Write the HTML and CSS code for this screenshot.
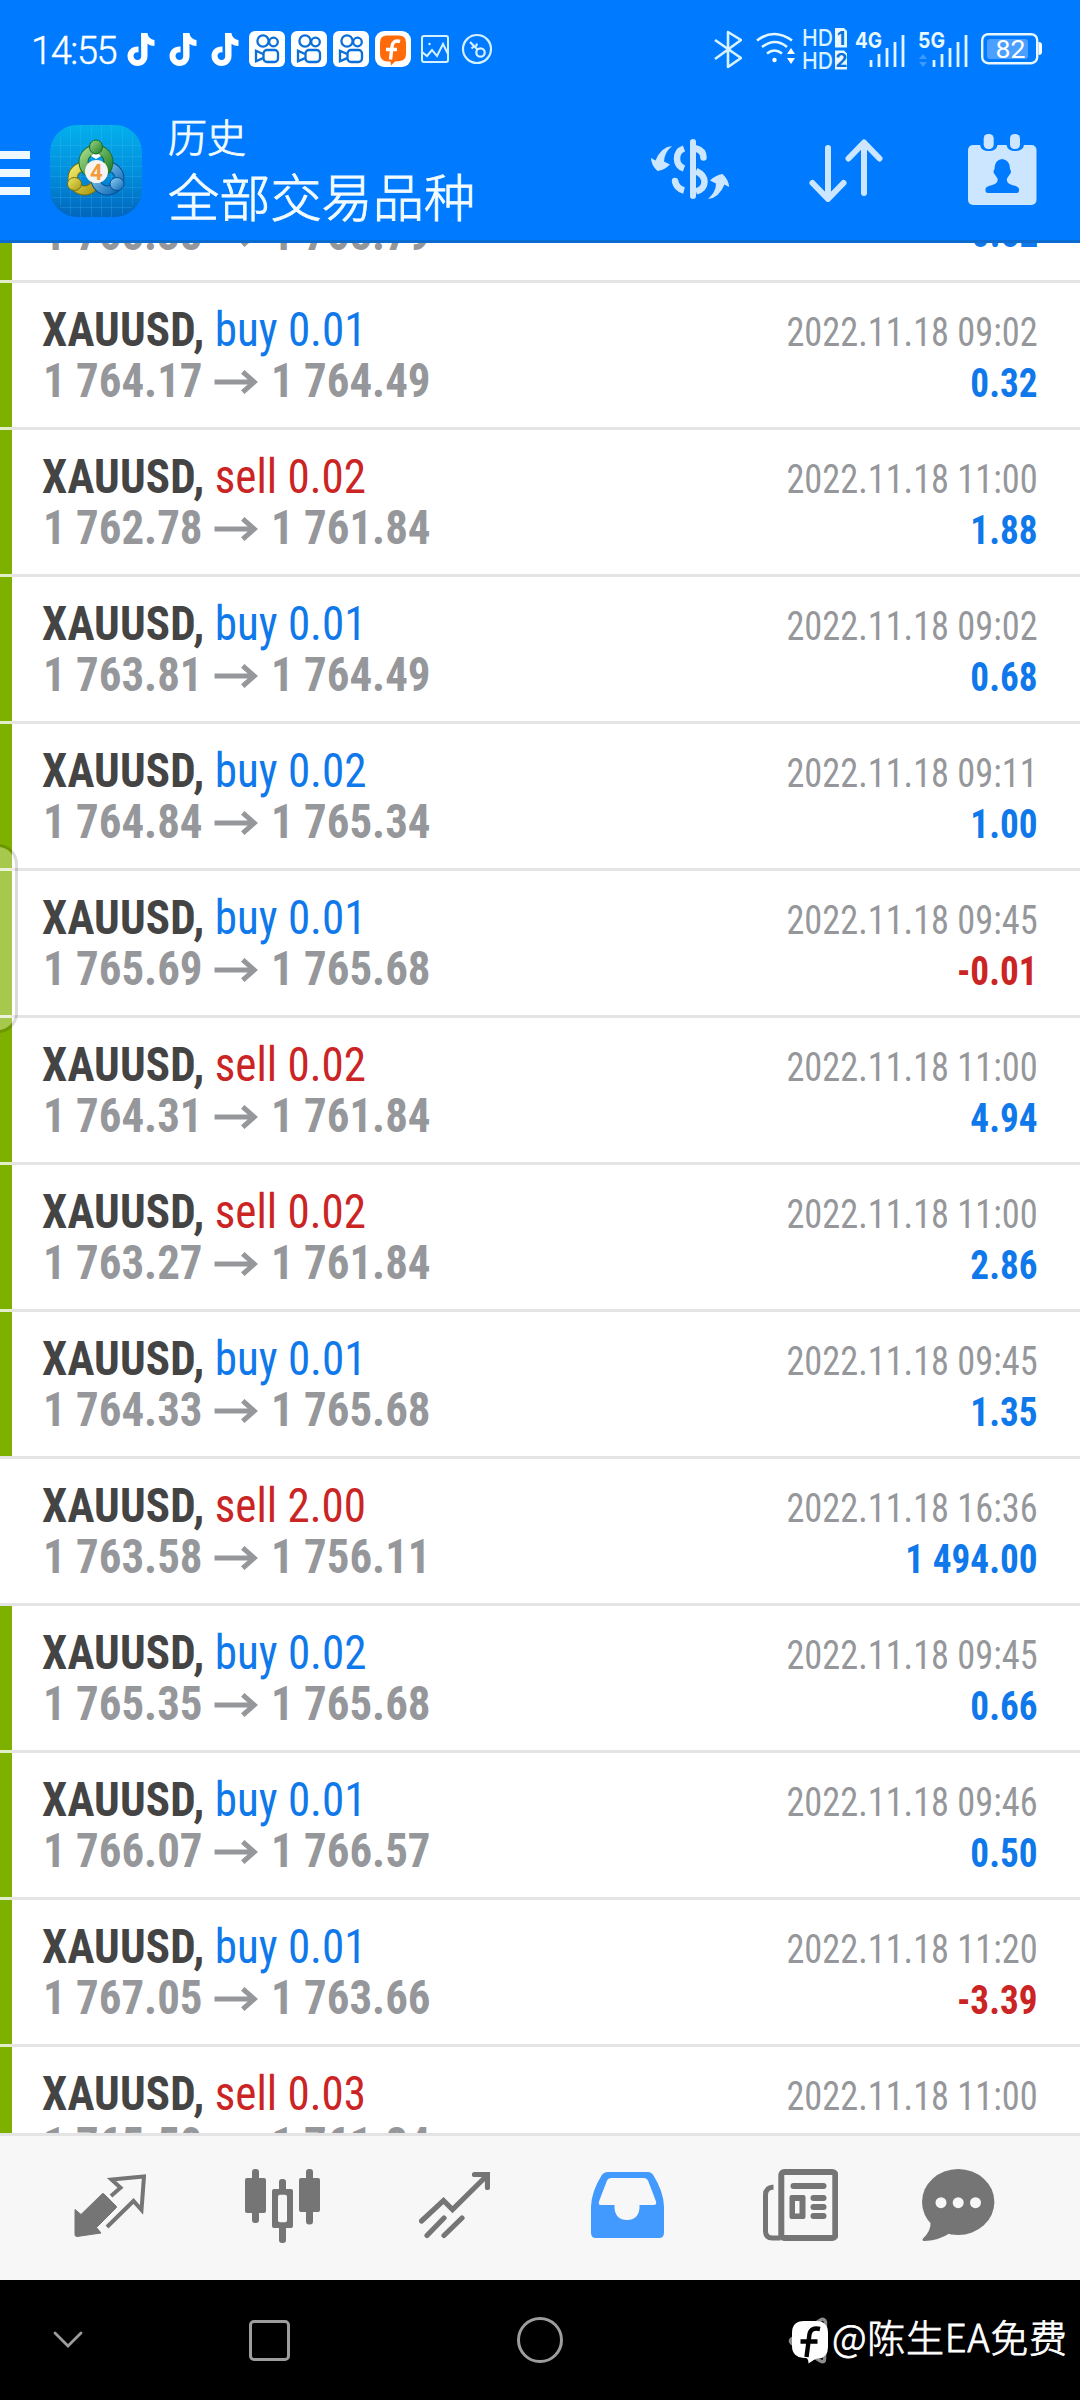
FILE: index.html
```html
<!DOCTYPE html>
<html lang="zh-CN">
<head>
<meta charset="utf-8">
<title>历史</title>
<link rel="stylesheet" href="styles.css">
</head>
<body>
<svg class="defs" width="0" height="0">
  <defs>
    <symbol id="note" viewBox="0 0 36 36"><path d="M18 2h6.500c.5 4 3 6.500 7 7v6c-2.500 0-5-.8-7-2.200V25c0 6-4.500 10-10 10S4.500 30.500 4.500 25c0-6 5-10 11-9.500v6c-2.700-.6-5 1-5 3.600 0 2.400 1.800 3.900 4 3.900 2.300 0 3.700-1.600 3.700-4z" fill="#fff"/></symbol>
    <symbol id="cam" viewBox="0 0 36 36"><rect width="36" height="36" rx="6" fill="#fff"/><g fill="none" stroke="#0a6fd8" stroke-width="2.300"><circle cx="14" cy="10" r="5.600"/><circle cx="24.500" cy="11" r="4.300"/><rect x="14.500" y="19" width="14.500" height="12" rx="3.500"/><path d="M14 23l-7-3.200v10.500l7-3.200"/></g></symbol>
    <symbol id="arrow" viewBox="0 0 44 24" preserveAspectRatio="none"><path d="M0 12h39M28.500 1.800l11.500 10.200L28.500 22.200" fill="none" stroke="#95979b" stroke-width="5"/></symbol>
  </defs>
</svg>

<header class="top">
  <div class="status">
    <span class="clock">14:55</span>
    <div class="notifs">
      <svg><use href="#note"/></svg><svg><use href="#note"/></svg><svg><use href="#note"/></svg>
      <svg><use href="#cam"/></svg><svg><use href="#cam"/></svg><svg><use href="#cam"/></svg>
      <svg viewBox="0 0 36 36"><rect width="36" height="36" rx="9" fill="#fff"/><path d="M12 4.500h12q7 0 7 7v11q0 7-6 7.500l-5 .5-4 4-.5-4H12q-7-1-7-8v-11q0-7 7-7z" fill="#ff6a0a"/><path d="M25 10.500c-5-1.500-7.500 1-8 5l-1.500 13M11 18.500h11" fill="none" stroke="#fff" stroke-width="3.400"/></svg>
      <svg viewBox="0 0 36 36" fill="none" stroke="#d5f0ff" stroke-width="2"><rect x="5" y="5" width="26" height="26" rx="2"/><path d="M5 21l5 4 5-6 5 6 6-12 5 10"/><circle cx="12.500" cy="13" r="1.200" fill="#d5f0ff" stroke="none"/></svg>
      <svg viewBox="0 0 36 36" fill="none" stroke="#d5f0ff" stroke-width="2.200"><circle cx="18" cy="18" r="14"/><circle cx="21.500" cy="21.500" r="4.200"/><path d="M18.500 18.500l-7.500-7.500M15.500 15l-3 2.500M18 12.500l-1 3"/></svg>
    </div>
    <div class="system">
      <svg class="bt" viewBox="0 0 28 38"><path d="M1 10l26 18-13 9V2l13 8L1 29" fill="none" stroke="#d8f2ff" stroke-width="2.600" stroke-linejoin="round"/></svg>
      <svg class="wifi" viewBox="0 0 40 34"><g fill="none" stroke="#e4f7ff" stroke-width="2.600"><path d="M1 8.500q17-13 35 0M6 15q13-10 25 0M11 21.500q7.500-6 15 0"/></g><circle cx="18.500" cy="28" r="2.200" fill="#fff"/><path d="M31 22l4-6 4 6zM31 26h8l-4 6z" fill="#fff"/></svg>
      <svg class="hd" viewBox="0 0 44 42"><path d="M32 0h9l3 3v16.500H32zM32 22.500h9l3 3v16H32z" fill="#e8f8ff"/><g font-family="Inter" font-size="22.500" font-weight="500" fill="#d8f2ff"><text x="-1" y="18" textLength="31" lengthAdjust="spacingAndGlyphs">HD</text><text x="-1" y="40.500" textLength="31" lengthAdjust="spacingAndGlyphs">HD</text></g><g font-family="Inter" font-size="19" font-weight="700" fill="#0a6fd8"><text x="34" y="17">1</text><text x="32.500" y="39">2</text></g></svg>
      <svg class="sig" viewBox="0 0 50 36"><text x="0" y="17" font-family="Inter" font-size="21.500" font-weight="700" fill="#e8f8ff" textLength="27" lengthAdjust="spacingAndGlyphs">4G</text><path d="M16 29v7M24 23v13M32 17v19M40 11v25M48 4v32" stroke="#e0f5ff" stroke-width="2.800"/></svg>
      <svg class="sig" viewBox="0 0 50 36"><text x="0" y="17" font-family="Inter" font-size="21.500" font-weight="700" fill="#e8f8ff" textLength="27" lengthAdjust="spacingAndGlyphs">5G</text><path d="M16 29v7M24 23v13M32 17v19M40 11v25M48 4v32" stroke="#e0f5ff" stroke-width="2.800"/><path d="M1 28l4-5 4 5zM1 31h8l-4 5z" fill="#3f9aff"/></svg>
      <svg class="batt" viewBox="0 0 61 32"><rect x="1.200" y="1.200" width="55" height="29" rx="6" fill="none" stroke="#e8f8ff" stroke-width="2.400"/><rect x="6" y="6" width="41" height="20" rx="3" fill="#4b9fff"/><path d="M57.500 9q3.500 0 3.500 3v7q0 3-3.500 3z" fill="#fff"/><text x="14.500" y="25.300" font-family="Roboto" font-size="26.500" textLength="30" lengthAdjust="spacingAndGlyphs" fill="#fff">82</text></svg>
    </div>
  </div>

  <div class="appbar">
    <div class="burger"><i></i><i></i><i></i></div>
    <svg class="logo" viewBox="0 0 92 92">
      <defs>
        <linearGradient id="bg" x1="0" y1="0" x2="0" y2="1"><stop offset="0" stop-color="#03b0ec"/><stop offset=".5" stop-color="#0290dd"/><stop offset="1" stop-color="#0166bd"/></linearGradient>
        <linearGradient id="gr" x1="0" y1="0" x2="1" y2="1"><stop offset="0" stop-color="#9fd883"/><stop offset="1" stop-color="#1f7d2d"/></linearGradient>
        <linearGradient id="ye" x1="0" y1="0" x2="1" y2="1"><stop offset="0" stop-color="#f1e868"/><stop offset="1" stop-color="#a99a12"/></linearGradient>
        <linearGradient id="bl" x1="0" y1="0" x2="1" y2="1"><stop offset="0" stop-color="#8fd3f5"/><stop offset="1" stop-color="#0d66b4"/></linearGradient>
      </defs>
      <rect width="92" height="92" rx="27" fill="url(#bg)"/>
      <path d="M10.500 12v68M20.500 2v88M30.500 0v92M41.500 0v92M51.500 0v92M61.500 0v92M72.500 3v86M82.500 12v68M2 20.500h88M0 31.500h92M0 41.500h92M0 51.500h92M0 62.500h92M2 72.500h88M10 82.500h72" stroke="#5cc4ff" stroke-opacity=".2"/>
      <g fill="none" stroke-width="8">
        <circle cx="34.500" cy="53.500" r="12" stroke="#74700f" stroke-width="10"/><circle cx="34.500" cy="53.500" r="12" stroke="url(#ye)"/>
        <circle cx="57.500" cy="53.500" r="12" stroke="#0a4e93" stroke-width="10"/><circle cx="57.500" cy="53.500" r="12" stroke="url(#bl)"/>
        <circle cx="46" cy="37" r="12.500" stroke="#176a25" stroke-width="10"/><circle cx="46" cy="37" r="12.500" stroke="url(#gr)"/>
      </g>
      <path d="M41 31l5 3 5-3-2-2h-6z" fill="#fff"/>
      <ellipse cx="46" cy="22" rx="6.500" ry="7" fill="url(#gr)" stroke="#176a25"/>
      <ellipse cx="24.500" cy="59" rx="7" ry="6.500" fill="url(#ye)" stroke="#74700f"/>
      <ellipse cx="67" cy="59" rx="7" ry="6.500" fill="url(#bl)" stroke="#0a4e93"/>
      <circle cx="46.500" cy="46.500" r="11.500" fill="#f6f4f2"/>
      <text x="40" y="54.500" font-family="Roboto" font-size="22" font-weight="700" fill="#f29a3c">4</text>
    </svg>
    <div class="titles"><div class="sub">历史</div><div class="main">全部交易品种</div></div>
    <svg class="act dollar" viewBox="651 139 78 60"><g fill="none" stroke="#cce6ff" stroke-width="6.500"><path d="M693 142v54" stroke-width="6" stroke-linecap="round"/><path d="M684 148.500q-7 2.500-7 10t7 10M696 171q8.500 4 8.500 11t-8.500 9.500"/><path d="M696 148.500q7.500 2 7.500 9" stroke-linecap="round"/><path d="M675 181q1.500 7.500 9 9.500"/><circle cx="675" cy="181" r="3.200" fill="#cce6ff" stroke="none"/></g><g fill="#cce6ff"><path id="swirl" d="M672 146q-11 1-16.500 14.500L651 158q0 7 6.500 13 7-1 12.500-6.500l-6-3q0-8.500 8-15.500z"/><use href="#swirl" transform="rotate(180 690 172.500)"/></g></svg>
    <svg class="act sort" viewBox="809 139 74 63" fill="none" stroke="#cce6ff" stroke-width="6" stroke-linecap="round" stroke-linejoin="round"><path d="M828 148v50M812.500 183l15.500 16 15.500-16M864 193v-50M848.500 158.500l15.500-16 15.500 16"/></svg>
    <svg class="act cal" viewBox="967 134 70 72"><rect x="968" y="145" width="68.500" height="60" rx="5" fill="#cce6ff"/><path d="M980 144h17.500v1q-1 6-8.700 6t-8.800-6zM1006.500 144h17.500v1q-1 6-8.700 6t-8.800-6z" fill="#007bff"/><rect x="983.700" y="134" width="10" height="15" rx="4.500" fill="#cce6ff"/><rect x="1010" y="134" width="10" height="15" rx="4.500" fill="#cce6ff"/><path d="M1002 159q8 1 8 10 2 3 0 5l-3 4.500q-1 5 5 6.500 7 1.500 7 4v2q0 2-2.500 2h-28.500q-2.500 0-2.500-2v-2q0-2.500 7-4 6-1.500 5-6.500l-3-4.500q-2-2 0-5 0-9 7.500-10z" fill="#007bff"/></svg>
  </div>
</header>

<main class="list">
  <div class="row partial"><div class="l"><p class="p">1 765.38<svg><use href="#arrow"/></svg>1 765.79</p></div><div class="r"><p class="v">0.82</p></div></div>
  <div class="row"><div class="l"><p class="t"><b>XAUUSD,</b> <span class="buy">buy 0.01</span></p><p class="p">1 764.17<svg><use href="#arrow"/></svg>1 764.49</p></div><div class="r"><p class="d">2022.11.18 09:02</p><p class="v">0.32</p></div></div>
  <div class="row"><div class="l"><p class="t"><b>XAUUSD,</b> <span class="sell">sell 0.02</span></p><p class="p">1 762.78<svg><use href="#arrow"/></svg>1 761.84</p></div><div class="r"><p class="d">2022.11.18 11:00</p><p class="v">1.88</p></div></div>
  <div class="row"><div class="l"><p class="t"><b>XAUUSD,</b> <span class="buy">buy 0.01</span></p><p class="p">1 763.81<svg><use href="#arrow"/></svg>1 764.49</p></div><div class="r"><p class="d">2022.11.18 09:02</p><p class="v">0.68</p></div></div>
  <div class="row"><div class="l"><p class="t"><b>XAUUSD,</b> <span class="buy">buy 0.02</span></p><p class="p">1 764.84<svg><use href="#arrow"/></svg>1 765.34</p></div><div class="r"><p class="d">2022.11.18 09:11</p><p class="v">1.00</p></div></div>
  <div class="row"><div class="l"><p class="t"><b>XAUUSD,</b> <span class="buy">buy 0.01</span></p><p class="p">1 765.69<svg><use href="#arrow"/></svg>1 765.68</p></div><div class="r"><p class="d">2022.11.18 09:45</p><p class="v loss">-0.01</p></div></div>
  <div class="row"><div class="l"><p class="t"><b>XAUUSD,</b> <span class="sell">sell 0.02</span></p><p class="p">1 764.31<svg><use href="#arrow"/></svg>1 761.84</p></div><div class="r"><p class="d">2022.11.18 11:00</p><p class="v">4.94</p></div></div>
  <div class="row"><div class="l"><p class="t"><b>XAUUSD,</b> <span class="sell">sell 0.02</span></p><p class="p">1 763.27<svg><use href="#arrow"/></svg>1 761.84</p></div><div class="r"><p class="d">2022.11.18 11:00</p><p class="v">2.86</p></div></div>
  <div class="row last"><div class="l"><p class="t"><b>XAUUSD,</b> <span class="buy">buy 0.01</span></p><p class="p">1 764.33<svg><use href="#arrow"/></svg>1 765.68</p></div><div class="r"><p class="d">2022.11.18 09:45</p><p class="v">1.35</p></div></div>
  <div class="row plain"><div class="l"><p class="t"><b>XAUUSD,</b> <span class="sell">sell 2.00</span></p><p class="p">1 763.58<svg><use href="#arrow"/></svg>1 756.11</p></div><div class="r"><p class="d">2022.11.18 16:36</p><p class="v">1 494.00</p></div></div>
  <div class="row"><div class="l"><p class="t"><b>XAUUSD,</b> <span class="buy">buy 0.02</span></p><p class="p">1 765.35<svg><use href="#arrow"/></svg>1 765.68</p></div><div class="r"><p class="d">2022.11.18 09:45</p><p class="v">0.66</p></div></div>
  <div class="row"><div class="l"><p class="t"><b>XAUUSD,</b> <span class="buy">buy 0.01</span></p><p class="p">1 766.07<svg><use href="#arrow"/></svg>1 766.57</p></div><div class="r"><p class="d">2022.11.18 09:46</p><p class="v">0.50</p></div></div>
  <div class="row"><div class="l"><p class="t"><b>XAUUSD,</b> <span class="buy">buy 0.01</span></p><p class="p">1 767.05<svg><use href="#arrow"/></svg>1 763.66</p></div><div class="r"><p class="d">2022.11.18 11:20</p><p class="v loss">-3.39</p></div></div>
  <div class="row"><div class="l"><p class="t"><b>XAUUSD,</b> <span class="sell">sell 0.03</span></p><p class="p">1 765.50<svg><use href="#arrow"/></svg>1 761.84</p></div><div class="r"><p class="d">2022.11.18 11:00</p></div></div>
  <div class="handle"></div>
</main>

<nav class="tabs">
  <svg width="72" height="74" viewBox="74 2169 72 74"><path d="M75 2209.500l6 5 21-20.500q1-1 2 0l12 12q1 1 0 2l-19.500 19.500 4.500 5.500-24 3.500q-2 0-2-2z" fill="#757575" stroke="#757575"/><path d="M111 2196l9.500-8.200-9-8.300 32.500-3-2.500 33.500-8-9-26.500 26" fill="none" stroke="#757575" stroke-width="4"/></svg>
  <svg width="75" height="74" viewBox="244 2169 75 74" fill="#757575"><rect x="244" y="2178" width="21" height="35" rx="2"/><rect x="251" y="2169" width="7" height="54" rx="3"/><rect x="278" y="2179" width="7" height="64" rx="3"/><rect x="271" y="2189" width="21" height="39" rx="2"/><rect x="277" y="2194.700" width="9" height="27.500" rx="2" fill="#f7f7f7"/><rect x="298" y="2178" width="21" height="34" rx="2"/><rect x="305" y="2169" width="7" height="55.500" rx="3"/></svg>
  <svg class="trend" width="71" height="74" viewBox="418 2169 71 74" fill="none" stroke="#757575" stroke-width="5.200" stroke-linecap="round"><path d="M420.500 2221l22-20.500 9 9 35-34.500M473.500 2174.500h13v13M426 2235.500l17-17.500M443 2235.500l18-17.500"/></svg>
  <svg width="73" height="74" viewBox="590 2169 73 74"><path fill-rule="evenodd" fill="#429aff" d="M607 2172h40q3.500 0 5.500 3.500 10 16 10.500 31v26q0 5.500-5 5.500h-63q-5 0-5-5.500v-26q.5-15 10.500-31 2-3.500 6.500-3.500zM610 2178q-3 0-4 2.500l-8 21q-1 3.500 2 3.500h13.500v3q1 12 12.500 12t12.500-12v-3h14q3.500 0 2.500-3.500l-8-21q-1-2.500-4-2.500z"/></svg>
  <svg width="75" height="74" viewBox="762.500 2169 75 74" fill="#757575"><rect x="780.800" y="2172" width="54" height="66" rx="3" fill="none" stroke="#757575" stroke-width="6"/><path d="M773 2187q-8 .5-8 8v36q0 7 7 7h8" fill="none" stroke="#757575" stroke-width="5"/><rect x="790" y="2183" width="36" height="6" rx="3"/><path fill-rule="evenodd" d="M791 2195h12q2 0 2 2v20q0 2-2 2h-12q-2 0-2-2v-20q0-2 2-2zM794.500 2201v12.500h4.500V2201z"/><rect x="810" y="2195" width="16" height="6" rx="3"/><rect x="810" y="2204" width="16" height="6" rx="3"/><rect x="810" y="2213" width="16" height="6" rx="3"/></svg>
  <svg class="chat" width="73" height="74" viewBox="921.500 2169 73 74"><path d="M930 2221q1 10-7.500 17.500-1.500 3 2 2.500 15-1 25-8z" fill="#757575"/><ellipse cx="957.700" cy="2202" rx="36.200" ry="33" fill="#757575"/><g fill="#f7f7f7"><circle cx="940.500" cy="2202.700" r="5.500"/><circle cx="957.700" cy="2202.700" r="5.500"/><circle cx="975" cy="2202.700" r="5.500"/></g></svg>
</nav>

<footer class="sysnav">
  <svg class="down" viewBox="0 0 30 18" fill="none" stroke="#9d9d9d" stroke-width="2.800" stroke-linecap="round"><path d="M2 2l13 13L28 2"/></svg>
  <i class="square"></i>
  <i class="circle"></i>
  <div class="mark">
    <svg viewBox="788 2314 44 50"><path d="M825.500 2321q-1-4-5-2l-29 19q-2 2 0 4l29 18q4 2 4-2z" fill="none" stroke="#8d8d8d" stroke-width="3.500"/><path d="M804 2320h12q12 0 12 12v14q0 11-10 11.500-2 0-3.500 1l-6 4q0-5-2.500-5.500h-2q-12-1-12-12v-13q0-12 12-12z" fill="#fff"/><path d="M820 2328q-9-2-10.500 5l-3 23M800.500 2340.500h17" fill="none" stroke="#000" stroke-width="4.400"/></svg>
    <span>@陈生<em>EA</em>免费</span>
  </div>
</footer>
</body>
</html>
```
FILE: styles.css
```css
* { box-sizing: border-box; }
body {
  margin: 0;
  width: 1080px;
  height: 2400px;
  display: flex;
  flex-direction: column;
  overflow: hidden;
  background: #fff;
  font-family: "Roboto Condensed", Roboto, sans-serif;
}
p { margin: 0; }
svg { display: block; flex: none; }
.defs { position: absolute; }

.top {
  height: 243px;
  flex: none;
  background: #007bff;
  border-bottom: 3px solid #0a6bd0;
}
.status {
  height: 98px;
  display: flex;
  align-items: center;
  padding-left: 31px;
}
.clock {
  width: 92px;
  padding-top: 3px;
  font: 300 38px/40px Roboto, sans-serif;
  letter-spacing: -1.400px;
  color: #fff;
  -webkit-text-stroke: .4px #fff;
}
.notifs { display: flex; gap: 6px; }
.notifs svg { width: 36px; height: 36px; }
.system {
  display: flex;
  align-items: center;
  margin-left: auto;
  padding-right: 38px;
}
.bt { width: 28px; height: 38px; margin-right: 14px; }
.wifi { width: 40px; height: 34px; margin-right: 7px; }
.hd { width: 44px; height: 42px; margin-right: 8.500px; }
.sig { width: 50px; height: 36px; margin-right: 13px; }
.batt { width: 61px; height: 32px; }

.appbar {
  height: 142px;
  display: flex;
  align-items: flex-start;
}
.burger {
  width: 30px;
  margin: 53px 20px 0 0;
  display: flex;
  flex-direction: column;
  gap: 10px;
}
.burger i { height: 8px; background: #eef9ff; }
.logo { width: 92px; height: 92px; margin-top: 27px; }
.titles {
  width: 509px;
  padding: 12px 0 0 26px;
  font-family: "Noto Sans CJK SC", sans-serif;
  font-weight: 300;
  color: #f2fbff;
  -webkit-text-stroke: .9px #f2fbff;
}
.sub { font-size: 39px; line-height: 51px; }
.main { font-size: 51.200px; line-height: 69px; }
.act { margin-top: 41px; }
.dollar { width: 78px; height: 60px; }
.sort { width: 74px; height: 63px; margin-left: 80px; }
.cal { width: 70px; height: 72px; margin: 36px 0 0 84px; }

.list {
  position: relative;
  flex: 1;
  overflow: hidden;
  min-height: 0;
}
.row {
  height: 147px;
  display: flex;
  justify-content: space-between;
  padding: 21px 42px 0;
  background:
    linear-gradient(#7eb000, #7eb000) 0 0 / 12px calc(100% - 3px) no-repeat,
    linear-gradient(#e2edc9, #e2edc9) 0 100% / 12px 3px no-repeat,
    linear-gradient(#e4e4e4, #e4e4e4) 0 100% / 100% 3px no-repeat;
}
.row.last {
  background:
    linear-gradient(#7eb000, #7eb000) 0 0 / 12px calc(100% - 3px) no-repeat,
    linear-gradient(#e4e4e4, #e4e4e4) 0 100% / 100% 3px no-repeat;
}
.row.plain { background: linear-gradient(#e4e4e4, #e4e4e4) 0 100% / 100% 3px no-repeat; }
.row.partial {
  height: 75px;
  margin-top: -35px;
  padding-top: 0;
}
.row.partial .r { padding-top: 0; }
.t, .p {
  font-size: 48px;
  line-height: 51px;
  white-space: nowrap;
  transform-origin: left;
}
.t { color: #444; transform: scaleX(.938); }
.t b { letter-spacing: .2px; }
.buy { color: #0f78ea; }
.sell { color: #cb2424; }
.p {
  display: flex;
  align-items: center;
  padding-left: 1px;
  font-weight: 700;
  color: #95979b;
  transform: scaleX(.936);
}
.p svg { width: 47px; height: 24px; margin: 2px 14px 0 12px; }
.r { text-align: right; padding-top: 3px; }
.d, .v { font-size: 40px; line-height: 51px; transform-origin: right; }
.d { color: #95979b; transform: scaleX(.908); }
.v { color: #0f78ea; font-weight: 700; transform: scaleX(.93); }
.v.loss { color: #cb2424; }

.handle {
  position: absolute;
  left: -22px;
  top: 601px;
  width: 40px;
  height: 189px;
  border: 3px solid rgba(0, 0, 0, .14);
  border-radius: 26px;
  background: rgba(255, 255, 255, .3);
  background-clip: padding-box;
}

.tabs {
  flex: none;
  height: 147px;
  padding: 33px 0 0 74px;
  display: flex;
  gap: 99px;
  border-top: 3px solid #e4e4e4;
  background: #f7f7f7;
}
.trend { margin-right: 1.500px; }
.chat { margin-left: -15px; }

.sysnav {
  flex: none;
  height: 120px;
  display: flex;
  align-items: center;
  background: #000;
}
.down { width: 30px; height: 18px; margin-left: 53px; }
.square {
  width: 41px;
  height: 41px;
  margin-left: 166px;
  border: 3px solid #9d9d9d;
  border-radius: 5px;
}
.circle {
  width: 46px;
  height: 46px;
  margin-left: 227px;
  border: 3px solid #9d9d9d;
  border-radius: 50%;
}
.mark {
  display: flex;
  align-items: center;
  margin-left: 225px;
  font-family: "Noto Sans CJK SC", sans-serif;
  font-size: 38px;
  font-weight: 300;
  line-height: 50px;
  color: #fff;
  white-space: nowrap;
  -webkit-text-stroke: .8px #fff;
}
.mark svg { width: 44px; height: 50px; }
.mark span { margin-top: -9px; letter-spacing: .7px; }
.mark em { font-style: normal; }
```
